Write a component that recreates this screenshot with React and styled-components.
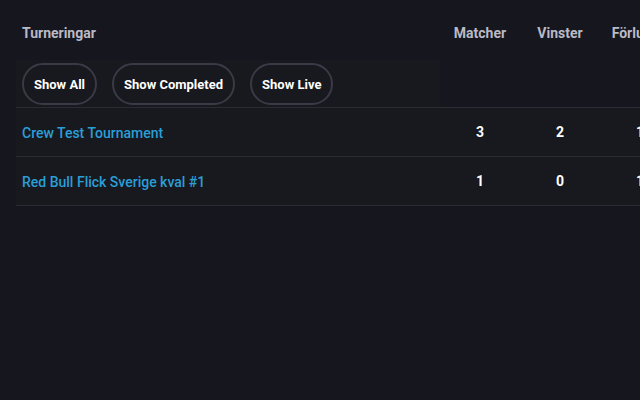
import React from "react";
import styled, { createGlobalStyle } from "styled-components";

const GlobalStyle = createGlobalStyle`
  html, body {
    margin: 0;
    padding: 0;
    background: #16161e;
    overflow: hidden;
  }
  body {
    font-family: Roboto, "Liberation Sans", sans-serif;
    width: 640px;
    height: 400px;
  }
`;

const rows = [
  { name: "Crew Test Tournament", matches: 3, wins: 2, losses: 1 },
  { name: "Red Bull Flick Sverige kval #1", matches: 1, wins: 0, losses: 1 },
];

const filters = ["Show All", "Show Completed", "Show Live"];

const App = () => {
  return (
    <>
      <GlobalStyle />
      <Wrapper>
        <Table>
          <thead>
            <tr>
              <HeadCell $align="left">Turneringar</HeadCell>
              <HeadCell>Matcher</HeadCell>
              <HeadCell>Vinster</HeadCell>
              <HeadCell>Förluster</HeadCell>
            </tr>
            <FilterRow>
              <FilterCell>
                <Filters>
                  {filters.map((f) => (
                    <FilterButton key={f}>{f}</FilterButton>
                  ))}
                </Filters>
              </FilterCell>
              <EmptyCell />
              <EmptyCell />
              <EmptyCell />
            </FilterRow>
          </thead>
          <tbody>
            {rows.map((r) => (
              <Row key={r.name}>
                <NameCell>
                  <TournamentLink href="#">{r.name}</TournamentLink>
                </NameCell>
                <NumCell>{r.matches}</NumCell>
                <NumCell>{r.wins}</NumCell>
                <NumCell>{r.losses}</NumCell>
              </Row>
            ))}
          </tbody>
        </Table>
      </Wrapper>
    </>
  );
};

export default App;

const Wrapper = styled.div`
  padding: 0 0 0 16px;
  width: 800px;
`;

const Table = styled.table`
  border-collapse: collapse;
  table-layout: fixed;
  width: 664px;
`;

const HeadCell = styled.th`
  height: 54px;
  padding: 6px 6px 0;
  text-align: ${(p) => p.$align || "center"};
  width: ${(p) => (p.$align === "left" ? "412px" : "68px")};
  font-size: 14px;
  font-weight: 700;
  color: #b9bac6;
  vertical-align: middle;
`;

const FilterRow = styled.tr`
  border-bottom: 1px solid #2a2b33;
`;

const FilterCell = styled.td`
  background: #18181f;
  padding: 1px 6px 0;
  height: 46px;
`;

const EmptyCell = styled.td``;

const Filters = styled.div`
  display: flex;
  align-items: center;
  gap: 15px;
`;

const FilterButton = styled.button`
  height: 42px;
  padding: 0 10px;
  border: 2px solid #3a3a46;
  border-radius: 21px;
  background: transparent;
  color: #ffffff;
  font-family: Roboto, "Liberation Sans", sans-serif;
  font-size: 13px;
  font-weight: 700;
  cursor: pointer;
`;

const Row = styled.tr`
  background: #18181f;
  border-bottom: 1px solid #2a2b33;
`;

const NameCell = styled.td`
  height: 48px;
  padding: 0 6px;
`;

const TournamentLink = styled.a`
  color: #2a9fd6;
  font-size: 14px;
  font-weight: 500;
  text-decoration: none;
`;

const NumCell = styled.td`
  text-align: center;
  color: #ffffff;
  font-size: 14px;
  font-weight: 700;
`;
